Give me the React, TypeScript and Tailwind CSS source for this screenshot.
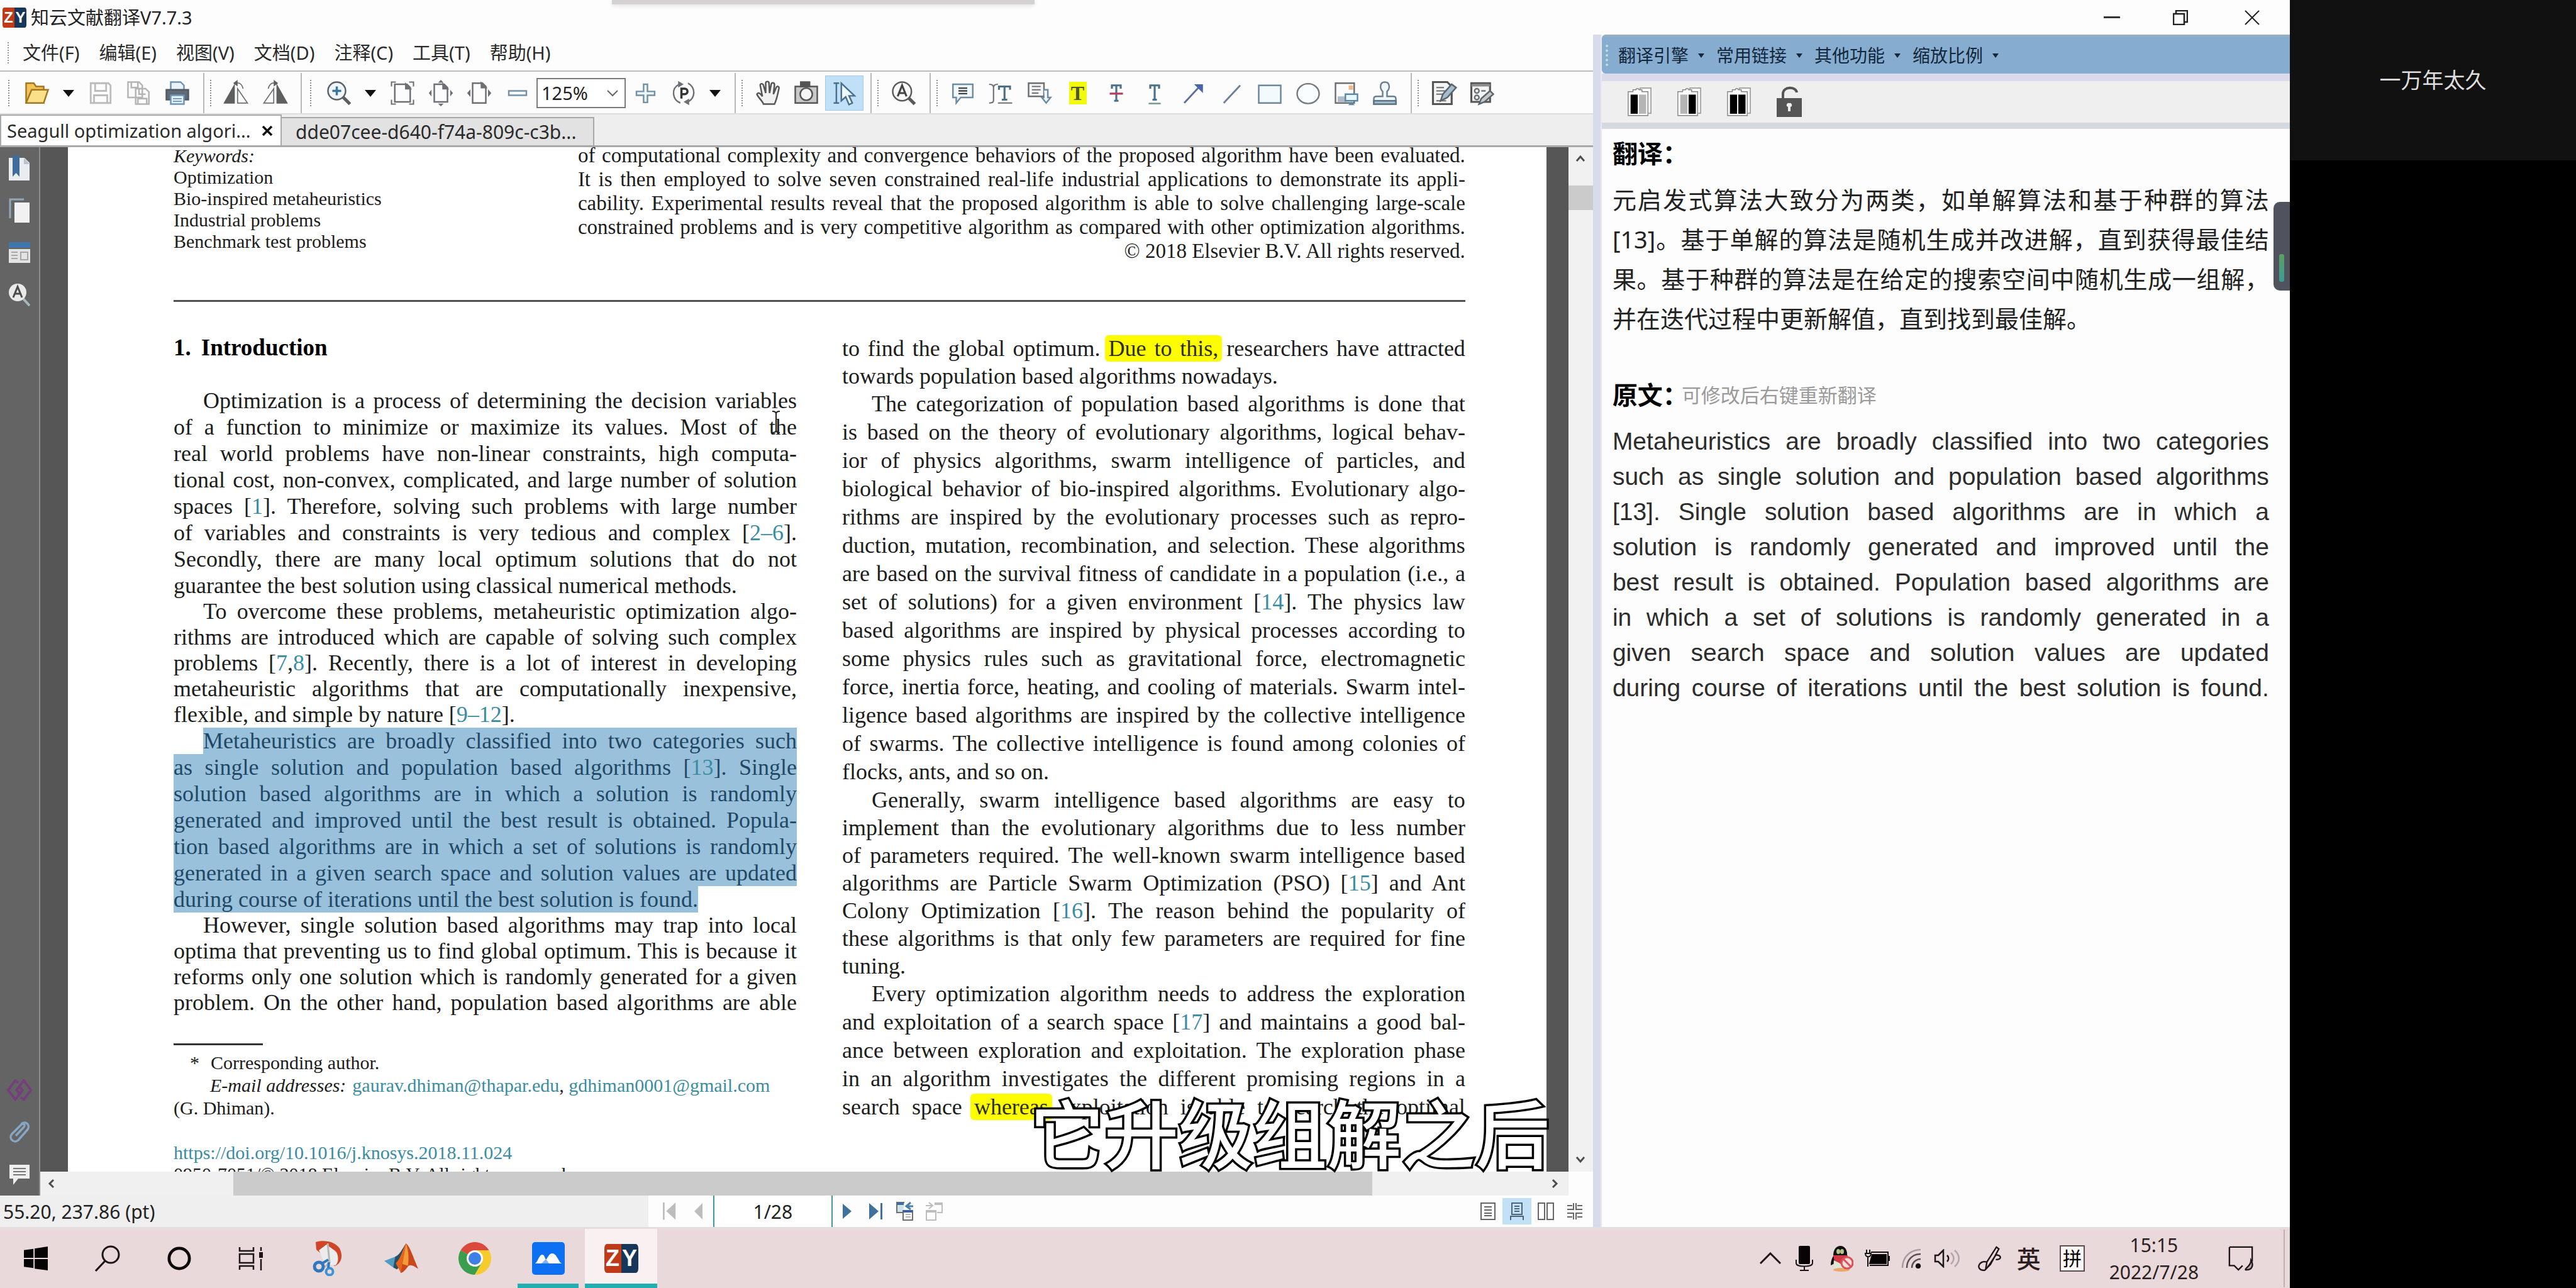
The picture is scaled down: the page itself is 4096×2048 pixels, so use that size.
import React from "react";

type Kids = { children?: React.ReactNode; className?: string };

function Svg({ children, className = "size-[42px]", box = "0 0 24 24" }: Kids & { box?: string }) {
  return (
    <svg viewBox={box} className={className} fill="none" stroke="#6c7074" strokeWidth="1.4" aria-hidden="true">
      {children}
    </svg>
  );
}

function Tool({ label, children, active }: Kids & { label: string; active?: boolean }) {
  return (
    <button
      type="button"
      aria-label={label}
      className={
        active
          ? "flex h-[56px] w-[61px] shrink-0 items-center justify-center border border-[#a9c9e2] bg-[#bfe0f6]"
          : "flex h-[56px] w-[61px] shrink-0 items-center justify-center"
      }
    >
      {children}
    </button>
  );
}

function Caret({ label }: { label: string }) {
  return (
    <button type="button" aria-label={label} className="flex h-[56px] w-[40px] shrink-0 items-center justify-center">
      <svg viewBox="0 0 18 11" className="w-[18px]" aria-hidden="true">
        <path d="M0 0h18L9 11z" fill="#111" />
      </svg>
    </button>
  );
}

function Group({ children, wide, last }: Kids & { wide?: boolean; last?: boolean }) {
  return (
    <div className={last ? "flex items-center" : "flex items-center border-r-2 border-[#b9b9b9] pr-[11px]"}>
      <span className={wide ? "flex w-[28px] justify-center" : "flex w-[20px] justify-center"}>
        <span className="h-[42px] border-l-2 border-dotted border-[#8f8f8f]" />
      </span>
      {children}
    </div>
  );
}

function Toolbar() {
  return (
    <div className="flex h-[70px] items-stretch border-y-2 border-t-[#bdbdbd] border-b-[#dedede] bg-[#fcfcfc] pt-[2px]">
      <Group wide>
        <Tool label="打开">
          <Svg>
            <path d="M2 21V3h7l2 3h7v15z" fill="#f3c455" stroke="#a27622" />
            <path d="M2 21 7 9h15l-4 12z" fill="#fbe089" stroke="#a27622" />
          </Svg>
        </Tool>
        <Caret label="最近文件" />
        <Tool label="保存">
          <Svg>
            <path d="M3 3h16l2 2v16H3z M7 3v7h10V3 M6 21v-7h12v7" stroke="#bcbcbc" strokeWidth="1.6" />
          </Svg>
        </Tool>
        <Tool label="另存为">
          <Svg>
            <path d="M2 2h10l3 3v11H2z M5 2v5h6V2 M9 8h9l3 3v11H9z M12 8v5h6 M11 22v-5h8v5" stroke="#b4b4b4" fill="#fafafa" />
          </Svg>
        </Tool>
        <Tool label="打印">
          <Svg>
            <path d="M6 2h9l3 3v5H6z" fill="#eaf3fa" stroke="#6e93b3" />
            <path d="M2 9h20v9H2z" fill="#5f6a75" stroke="#4e5963" />
            <path d="M6 14h12v8H6z" fill="#e3f1fb" stroke="#6e93b3" />
            <path d="M8 17h8M8 19.500h8" stroke="#6e93b3" strokeWidth="1" />
          </Svg>
        </Tool>
      </Group>
      <Group>
        <Tool label="向左旋转">
          <Svg>
            <path d="M1 21 10 5v16z" fill="#5f5f5f" stroke="#5f5f5f" strokeWidth="1" />
            <path d="M13 8v13h9z M11 3c4-1 6 1 7 5" strokeWidth="1" />
            <path d="m13 0-4 3 4 3z" fill="#5f5f5f" stroke="none" />
          </Svg>
        </Tool>
        <Tool label="向右旋转">
          <Svg>
            <path d="M23 21 14 5v16z" fill="#5f5f5f" stroke="#5f5f5f" strokeWidth="1" />
            <path d="M11 8v13H2z M13 3C9 2 7 4 6 8" strokeWidth="1" />
            <path d="m11 0 4 3-4 3z" fill="#5f5f5f" stroke="none" />
          </Svg>
        </Tool>
      </Group>
      <Group wide>
        <Tool label="放大镜">
          <Svg>
            <path d="m15 15 7 7" stroke="#5d6062" strokeWidth="3" />
            <circle cx="10" cy="10" r="8" fill="#eef7fd" stroke="#5d6062" />
            <path d="M10 6v8M6 10h8" stroke="#3d7398" strokeWidth="2" />
          </Svg>
        </Tool>
        <Caret label="缩放工具" />
        <Tool label="适合页面">
          <Svg>
            <path d="M5 4h11l3 3v13H5z" />
            <path d="M2 6V2h4M18 2h4v4M22 18v4h-4M6 22H2v-4" strokeWidth="1.200" />
            <path d="M15 4v4h4z" fill="#6c7074" />
          </Svg>
        </Tool>
        <Tool label="适合高度">
          <Svg>
            <path d="M6 4h9l3 3v13H6z" />
            <path d="m12 0 2.500 2.500h-5zM12 24l2.500-2.500h-5zM1 12l2.500-3v6zM23 12l-2.500-3v6z" fill="#6c7074" stroke="none" />
            <path d="M14 4v4h4z" fill="#6c7074" />
          </Svg>
        </Tool>
        <Tool label="适合宽度">
          <Svg>
            <path d="M6 3h9l3 3v15H6z" />
            <path d="m1 12 3-3.500v7zM23 12l-3-3.500v7z" fill="#6c7074" stroke="none" />
            <path d="M14 3v4h4z" fill="#6c7074" />
          </Svg>
        </Tool>
        <Tool label="缩小">
          <Svg>
            <path d="M4 10h16v4H4z" fill="#f4fafe" stroke="#7391a5" />
          </Svg>
        </Tool>
        <label className="relative flex h-[48px] w-[142px] shrink-0 items-center border-2 border-[#7b7b7b] bg-white">
          <span className="sr-only">缩放比例</span>
          <select defaultValue="125%" className="h-full w-full appearance-none bg-transparent pl-[6px] text-[29px] leading-[40px] text-[#222]">
            <option>125%</option>
          </select>
          <svg viewBox="0 0 18 12" className="pointer-events-none absolute right-[10px] w-[18px]" fill="none" stroke="#666" strokeWidth="2" aria-hidden="true">
            <path d="m1 2 8 8 8-8" />
          </svg>
        </label>
        <Tool label="放大">
          <Svg>
            <path d="M10.500 4h3.500v6.500h6.500v3.500H14v6.500h-3.500V14H4v-3.500h6.500z" fill="#eff8fe" stroke="#7391a5" />
          </Svg>
        </Tool>
        <Tool label="旋转视图">
          <Svg>
            <path d="M9 21c-7-3-9-13-1-17M16 3c7 4 7 13 0 17" />
            <path d="m7 1 5 3-5 3zM17 23l-5-3 5-3z" fill="#6c7074" stroke="none" />
            <path d="M10 17V8h3a2.500 2.500 0 0 1 0 5h-3" stroke="#333" strokeWidth="2" />
          </Svg>
        </Tool>
        <Caret label="旋转选项" />
      </Group>
      <Group>
        <Tool label="手形工具">
          <Svg>
            <path
              d="M8 22c-1-3-5-6-6-9 1-2 3-1 5 2L5 5c0-2 2.500-2 3 0l2 7V3c0-2 3-2 3 0l.5 9L15 4c.5-2 3-1.500 3 .5L17 13l2.500-6c1-2 3-1 2.500 1-1 5-2 10-4 14z"
              fill="#f1f1f1"
              stroke="#555"
            />
          </Svg>
        </Tool>
        <Tool label="快照">
          <Svg>
            <path d="M2 6h20v15H2z" fill="#c9c9c9" stroke="#555" />
            <path d="M7 2h8v4H7z" fill="#555" stroke="#555" />
            <circle cx="12" cy="13" r="5.500" fill="#f6f6f6" stroke="#555" />
          </Svg>
        </Tool>
        <Tool label="选择文本" active>
          <Svg>
            <path d="M2 3h5M4.500 3v18M2 21h5" stroke="#4a6f8c" />
            <path d="M9 3v16l4-3.500 3 7 3-1.500-3-6.500h5z" fill="#eef8ff" stroke="#4a6f8c" />
          </Svg>
        </Tool>
      </Group>
      <Group>
        <Tool label="查找">
          <Svg>
            <path d="m16 16 6 6" stroke="#5a5a5a" strokeWidth="3" />
            <circle cx="10.500" cy="10.500" r="8.500" fill="#fafafa" stroke="#5a5a5a" />
            <path d="m6.500 15 4-10 4 10M8 12h5" stroke="#444" strokeWidth="1.800" />
          </Svg>
        </Tool>
      </Group>
      <Group>
        <Tool label="注释">
          <Svg>
            <path d="M3 4h18v12H10l-4 5v-5H3z" fill="#f2f9fe" stroke="#6e8ba0" />
            <path d="M8 7.500h8M8 10h8M8 12.500h8" stroke="#444" />
          </Svg>
        </Tool>
        <Tool label="打字机">
          <Svg>
            <path d="M1 4c3 0 4 1 4 3v12c0 1-1 2-4 2M9 4C6 4 5 5 5 7M9 21h13" strokeWidth="1.200" />
            <path d="M10 9V6h10v3M15 6v12M12.500 18h5" stroke="#4c7088" strokeWidth="1.800" />
          </Svg>
        </Tool>
        <Tool label="标注框">
          <Svg>
            <path d="M2 3h14v12H2z" fill="#f6f6f6" />
            <path d="M5 6h8M5 9h8M5 12h6" strokeWidth="1.200" />
            <path d="M16 9h3.500v7H22l-4 5-4-5h2.500" stroke="#6e8ba0" fill="#eff8fe" />
          </Svg>
        </Tool>
        <Tool label="高亮">
          <span className="flex h-[36px] w-[28px] items-center justify-center bg-[#f3f90d] font-['Liberation_Serif',serif] text-[32px] leading-none font-bold text-[#4a5634]">T</span>
        </Tool>
        <Tool label="删除线">
          <Svg>
            <path d="M8 8V5h8v3M12 5v14M10 19h4" stroke="#4c7088" strokeWidth="1.800" />
            <path d="M6 12.500h12" stroke="#b83a5c" strokeWidth="1.800" />
          </Svg>
        </Tool>
        <Tool label="下划线">
          <Svg>
            <path d="M8 8V5h8v3M12 5v13M10 18h4" stroke="#4c7088" strokeWidth="1.800" />
            <path d="M6.500 21.500h11" stroke="#6f9c86" />
          </Svg>
        </Tool>
        <Tool label="箭头">
          <Svg>
            <path d="M4 21 17 7" stroke="#5c6e9b" strokeWidth="1.600" />
            <path d="M13 4h8v8z" fill="#4a64ab" stroke="none" />
          </Svg>
        </Tool>
        <Tool label="直线">
          <Svg>
            <path d="M5 21 20 5" stroke="#6f7f99" strokeWidth="1.600" />
          </Svg>
        </Tool>
        <Tool label="矩形">
          <Svg>
            <path d="M2 5h20v16H2z" fill="#f3fafe" stroke="#6a879c" />
          </Svg>
        </Tool>
        <Tool label="椭圆">
          <Svg>
            <ellipse cx="12" cy="12.500" rx="10" ry="9" stroke="#757b80" fill="#fafdff" />
          </Svg>
        </Tool>
        <Tool label="图像注释">
          <Svg>
            <path d="M2 3h17v18H2z" fill="#fbfbfb" />
            <path d="M4 15h8v5H4z" fill="#aebbc6" stroke="none" />
            <path d="M14 5h4v4h-4z" fill="#f0b98a" stroke="none" />
            <path d="M11 13h11v6H11z" fill="#e7f6ff" stroke="#5b88a8" />
            <path d="m16.500 20 3 3h-6z" fill="#5b88a8" stroke="none" />
          </Svg>
        </Tool>
        <Tool label="图章">
          <Svg>
            <path d="M2 22v-5c0-1.500 1-2 2.500-2h5.500v-4.500c-3-3-2.500-8.500 2-8.500s5 5.500 2 8.500V15h5.500c1.500 0 2.500.5 2.500 2v5z" fill="#f0f8fe" stroke="#6a7f90" />
            <path d="M2 19h20v3H2z" fill="#a9c0d0" stroke="#5c7588" />
          </Svg>
        </Tool>
      </Group>
      <Group last>
        <Tool label="编辑内容">
          <Svg>
            <path d="M2 2h13l4 4v16H2z" fill="#f4f4f4" stroke="#555" strokeWidth="1.800" />
            <path d="M5 7h7M5 10h8M5 13h6M5 19h9" strokeWidth="1.200" />
            <path d="m9 19 2-6 8-9 4 3-8 9z" fill="#a5bccd" stroke="#59656e" />
          </Svg>
        </Tool>
        <Tool label="编辑表单">
          <Svg>
            <path d="M2 3h17v17H2z" fill="#f4f4f4" stroke="#555" strokeWidth="1.800" />
            <path d="M2 4h17v2H2z" fill="#8b8b8b" stroke="none" />
            <circle cx="7" cy="10" r="2" />
            <circle cx="7" cy="16" r="2" />
            <path d="M11 10h4" />
            <path d="m9 22 2-5 8-7 3 3-8 7z" fill="#c7c7c7" stroke="#59656e" />
          </Svg>
        </Tool>
      </Group>
    </div>
  );
}

/* ~text~ marks a citation link, ^text^ marks a yellow highlight */
function Rich({ text }: { text: string }) {
  return (
    <>
      {text.split(/(~[^~]+~|\^[^^]+\^)/).map((part, i) => {
        if (part.startsWith("~"))
          return (
            <a key={i} href="#cite" className="text-[#3a8ca3]">
              {part.slice(1, -1)}
            </a>
          );
        if (part.startsWith("^"))
          return (
            <mark key={i} className="-mx-[6px] rounded-[6px] bg-[#fdfd00] px-[6px] py-[1px] text-[#2c2c08]">
              {part.slice(1, -1)}
            </mark>
          );
        return part;
      })}
    </>
  );
}

type ParaProps = { lines: string[]; indent?: boolean; open?: boolean; selected?: boolean };

function Para({ lines, indent = true, open, selected, className = "" }: ParaProps & { className?: string }) {
  return (
    <p className={className}>
      {lines.map((line, i) => {
        const tail = i === lines.length - 1 && !open;
        const cls = [
          "block whitespace-nowrap",
          tail ? "w-fit" : "text-justify [text-align-last:justify]",
          indent && i === 0 ? "ml-[47px]" : "",
          selected ? "bg-[#9ac1db] text-[#1f4866]" : "",
        ].join(" ");
        return (
          <span key={i} className={cls}>
            <Rich text={line} />
          </span>
        );
      })}
    </p>
  );
}

const leftParas: { lines: string[]; cls: string; open?: boolean; selected?: boolean }[] = [
  {
    cls: "leading-[42px]",
    lines: [
      "Optimization is a process of determining the decision variables",
      "of a function to minimize or maximize its values. Most of the",
      "real world problems have non-linear constraints, high computa-",
      "tional cost, non-convex, complicated, and large number of solution",
      "spaces [~1~]. Therefore, solving such problems with large number",
      "of variables and constraints is very tedious and complex [~2–6~].",
      "Secondly, there are many local optimum solutions that do not",
      "guarantee the best solution using classical numerical methods.",
    ],
  },
  {
    cls: "leading-[41px]",
    lines: [
      "To overcome these problems, metaheuristic optimization algo-",
      "rithms are introduced which are capable of solving such complex",
      "problems [~7~,~8~]. Recently, there is a lot of interest in developing",
      "metaheuristic algorithms that are computationally inexpensive,",
      "flexible, and simple by nature [~9–12~].",
    ],
  },
  {
    cls: "leading-[42px]",
    selected: true,
    lines: [
      "Metaheuristics are broadly classified into two categories such",
      "as single solution and population based algorithms [~13~]. Single",
      "solution based algorithms are in which a solution is randomly",
      "generated and improved until the best result is obtained. Popula-",
      "tion based algorithms are in which a set of solutions is randomly",
      "generated in a given search space and solution values are updated",
      "during course of iterations until the best solution is found.",
    ],
  },
  {
    cls: "leading-[41px]",
    open: true,
    lines: [
      "However, single solution based algorithms may trap into local",
      "optima that preventing us to find global optimum. This is because it",
      "reforms only one solution which is randomly generated for a given",
      "problem. On the other hand, population based algorithms are able",
    ],
  },
];

const rightParas: { lines: string[]; cls: string; open?: boolean; indent?: boolean }[] = [
  {
    cls: "leading-[44px]",
    indent: false,
    lines: [
      "to find the global optimum. ^Due to this,^ researchers have attracted",
      "towards population based algorithms nowadays.",
    ],
  },
  {
    cls: "leading-[45px]",
    lines: [
      "The categorization of population based algorithms is done that",
      "is based on the theory of evolutionary algorithms, logical behav-",
      "ior of physics algorithms, swarm intelligence of particles, and",
      "biological behavior of bio-inspired algorithms. Evolutionary algo-",
      "rithms are inspired by the evolutionary processes such as repro-",
      "duction, mutation, recombination, and selection. These algorithms",
      "are based on the survival fitness of candidate in a population (i.e., a",
      "set of solutions) for a given environment [~14~]. The physics law",
      "based algorithms are inspired by physical processes according to",
      "some physics rules such as gravitational force, electromagnetic",
      "force, inertia force, heating, and cooling of materials. Swarm intel-",
      "ligence based algorithms are inspired by the collective intelligence",
      "of swarms. The collective intelligence is found among colonies of",
      "flocks, ants, and so on.",
    ],
  },
  {
    cls: "leading-[44px]",
    lines: [
      "Generally, swarm intelligence based algorithms are easy to",
      "implement than the evolutionary algorithms due to less number",
      "of parameters required. The well-known swarm intelligence based",
      "algorithms are Particle Swarm Optimization (PSO) [~15~] and Ant",
      "Colony Optimization [~16~]. The reason behind the popularity of",
      "these algorithms is that only few parameters are required for fine",
      "tuning.",
    ],
  },
  {
    cls: "leading-[45px]",
    open: true,
    lines: [
      "Every optimization algorithm needs to address the exploration",
      "and exploitation of a search space [~17~] and maintains a good bal-",
      "ance between exploration and exploitation. The exploration phase",
      "in an algorithm investigates the different promising regions in a",
      "search space ^whereas^ exploitation is able to search the optimal",
    ],
  },
];

function PdfPage() {
  return (
    <article className="relative min-w-0 flex-1 overflow-hidden bg-white pr-[129px] pl-[168px] font-['Liberation_Serif',serif] text-[36px] text-[#1c1c1c]">
      <header className="flex justify-between border-b-3 border-[#505050] pb-[59px]">
        <div className="-mt-[3px] text-[30px] leading-[34px]">
          <p className="italic">Keywords:</p>
          <p>Optimization</p>
          <p>Bio-inspired metaheuristics</p>
          <p>Industrial problems</p>
          <p>Benchmark test problems</p>
        </div>
        <div className="-mt-[6px] w-[1411px] text-[33px] leading-[38px]">
          <Para
            indent={false}
            open
            lines={[
              "of computational complexity and convergence behaviors of the proposed algorithm have been evaluated.",
              "It is then employed to solve seven constrained real-life industrial applications to demonstrate its appli-",
              "cability. Experimental results reveal that the proposed algorithm is able to solve challenging large-scale",
              "constrained problems and is very competitive algorithm as compared with other optimization algorithms.",
            ]}
          />
          <p className="text-right">© 2018 Elsevier B.V. All rights reserved.</p>
        </div>
      </header>
      <div className="grid grid-cols-2 gap-[72px] pt-[52px]">
        <div>
          <h2 className="mb-[42px] flex gap-[16px] text-[37px] leading-[42px] font-bold text-black">
            <span>1.</span>
            <span>Introduction</span>
          </h2>
          {leftParas.map((p, i) => (
            <Para key={i} lines={p.lines} open={p.open} selected={p.selected} className={p.cls} />
          ))}
          <div className="mt-[44px] w-[142px] border-t-3 border-[#333]" />
          <footer className="pt-[10px] text-[30px] leading-[36px]">
            <p className="flex gap-[18px] pl-[26px]">
              <span>*</span>
              <span>Corresponding author.</span>
            </p>
            <p className="pl-[58px] whitespace-nowrap">
              <i className="mr-[10px]">E-mail addresses:</i>
              <a href="#mail1" className="text-[#3a8ca3]">gaurav.dhiman@thapar.edu</a>,{" "}
              <a href="#mail2" className="text-[#3a8ca3]">gdhiman0001@gmail.com</a>
            </p>
            <p>(G. Dhiman).</p>
            <p className="mt-[36px] leading-[34px]">
              <a href="#doi" className="text-[#3a8ca3]">https://doi.org/10.1016/j.knosys.2018.11.024</a>
            </p>
            <p className="leading-[34px]">0950-7051/© 2018 Elsevier B.V. All rights reserved.</p>
          </footer>
        </div>
        <div>
          {rightParas.map((p, i) => (
            <Para key={i} lines={p.lines} open={p.open} indent={p.indent} className={p.cls} />
          ))}
        </div>
      </div>
      <svg viewBox="0 0 12 36" className="absolute top-[419px] left-[1120px] w-[12px]" fill="none" stroke="#222" strokeWidth="2" aria-hidden="true">
        <path d="M0 1c4 0 6 1 6 4v26c0 3-2 4-6 4M12 1c-4 0-6 1-6 4M12 35c-4 0-6-1-6-4" />
      </svg>
    </article>
  );
}

function Arrow({ d, className }: { d: string; className: string }) {
  return (
    <svg viewBox="0 0 16 16" className={className} fill="none" stroke="#4d4d4d" strokeWidth="3" aria-hidden="true">
      <path d={d} />
    </svg>
  );
}

function SideRail() {
  const b = "flex h-[67px] w-full items-center justify-center";
  return (
    <aside className="flex w-[64px] shrink-0 flex-col justify-between border-r-2 border-[#8b8b8b] bg-[#646464]">
      <div className="flex flex-col">
        <button type="button" aria-label="书签" className={b}>
          <svg viewBox="0 0 34 42" className="w-[34px]" aria-hidden="true">
            <path d="M0 4h25l8 8v28H0z" fill="#e9edf0" />
            <path d="M6 0h11v34l-5.500-6L6 34z" fill="#3f6c9b" />
            <path d="M24 4v10h9z" fill="#b9c2ca" />
          </svg>
        </button>
        <button type="button" aria-label="缩略图" className={b}>
          <svg viewBox="0 0 34 40" className="w-[34px]" aria-hidden="true">
            <path d="M2 32V2h22" fill="none" stroke="#93a7b8" strokeWidth="3" />
            <path d="M9 7h24v32H9z" fill="#f1f1f1" />
          </svg>
        </button>
        <button type="button" aria-label="图层" className={b}>
          <svg viewBox="0 0 34 34" className="w-[34px]" aria-hidden="true">
            <path d="M0 0h34v9H0z" fill="#3f76ad" />
            <path d="M0 11h34v22H0z" fill="#e4e4e4" />
            <path d="M4 16h10M4 21h10M4 26h10M19 16h11v12H19z" stroke="#a8a8a8" strokeWidth="2" fill="none" />
          </svg>
        </button>
        <button type="button" aria-label="搜索" className={b}>
          <svg viewBox="0 0 34 36" className="w-[34px]" fill="none" aria-hidden="true">
            <path d="m22 23 11 12" stroke="#aab4bb" strokeWidth="4" />
            <circle cx="14" cy="14" r="14" fill="#e9e9e9" />
            <path d="m7 22 7-17 7 17M10 16h8" stroke="#4c4c4c" strokeWidth="3" />
          </svg>
        </button>
      </div>
      <div className="flex flex-col">
        <button type="button" aria-label="插件" className={b}>
          <svg viewBox="0 0 44 36" className="w-[42px]" fill="none" stroke="#763f7c" strokeWidth="4" aria-hidden="true">
            <path d="M20 6 15 2 3 18l12 16 12-16-7-7M24 30l5 4 12-16L29 2 17 18l7 8" />
          </svg>
        </button>
        <button type="button" aria-label="附件" className={b}>
          <svg viewBox="0 0 34 40" className="w-[34px]" fill="none" stroke="#86a6c3" strokeWidth="3.500" aria-hidden="true">
            <path d="m11 25 13-14c3-3-1-7-4-4L5 22c-6 7 3 16 10 10l14-16c7-8-3-16-9-10" />
          </svg>
        </button>
        <button type="button" aria-label="评论" className={b}>
          <svg viewBox="0 0 32 32" className="w-[32px]" aria-hidden="true">
            <path d="M0 0h32v22H14l-8 10V22H0z" fill="#efefef" />
            <path d="M6 6h20M6 11h20M6 16h20" stroke="#777" strokeWidth="2" />
          </svg>
        </button>
      </div>
    </aside>
  );
}

function StatusBar() {
  const b = "flex h-full w-[46px] items-center justify-center";
  return (
    <div className="flex h-[50px] items-center bg-[#fdfdfd] text-[30px] text-[#222]">
      <div className="flex h-full flex-1 items-center bg-[#efefef] pl-[5px]">55.20, 237.86 (pt)</div>
      <div className="flex h-full w-[1502px] items-center">
        <span className="w-[11px]" />
        <button type="button" aria-label="首页" className={b}>
          <svg viewBox="0 0 24 30" className="w-[22px]" fill="#bdbdbd" aria-hidden="true"><path d="M0 0h3v30H0zM22 0v30L6 15z" /></svg>
        </button>
        <button type="button" aria-label="上一页" className={b}>
          <svg viewBox="0 0 14 28" className="w-[13px]" fill="#bdbdbd" aria-hidden="true"><path d="M14 0v28L0 14z" /></svg>
        </button>
        <input aria-label="页码" defaultValue="1/28" className="h-full w-[190px] border-x-2 border-[#3b9a9a] bg-white text-center" />
        <button type="button" aria-label="下一页" className={b}>
          <svg viewBox="0 0 14 24" className="w-[14px]" fill="#3f719b" aria-hidden="true"><path d="M0 0v24l14-12z" /></svg>
        </button>
        <button type="button" aria-label="末页" className={b}>
          <svg viewBox="0 0 22 26" className="w-[22px]" fill="#3f719b" aria-hidden="true"><path d="M0 0v26l15-13zM18 0h3v26h-3z" /></svg>
        </button>
        <button type="button" aria-label="后退" className={b}>
          <svg viewBox="0 0 28 30" className="w-[28px]" fill="none" stroke="#707070" strokeWidth="2" aria-hidden="true">
            <path d="M11 17H1V1h12" fill="#cfe3ea" />
            <path d="M1 3h11" stroke="#3f6ea0" strokeWidth="4" />
            <path d="M27 7h-9m5-6-7 6 7 5" stroke="#4a7fa8" strokeWidth="3" />
            <path d="M11 14h15v15H11z" fill="#fafafa" />
            <path d="M11 15h15" stroke="#3f5f9a" strokeWidth="4" />
            <path d="M15 20h8M15 24h8" strokeWidth="1" />
          </svg>
        </button>
        <button type="button" aria-label="前进" className={b}>
          <svg viewBox="0 0 28 30" className="w-[28px]" fill="none" stroke="#bdbdbd" strokeWidth="2" aria-hidden="true">
            <path d="M15 2h12v15h-8M1 6h9M6 1l6 5-6 5M2 14h15v15H2z" />
            <path d="M15 3h12M2 15h15" strokeWidth="4" />
          </svg>
        </button>
        <div className="flex h-full flex-1 items-center justify-end pr-[6px]">
          <button type="button" aria-label="单页" className={b}>
            <svg viewBox="0 0 24 28" className="w-[24px]" fill="none" stroke="#666" strokeWidth="2" aria-hidden="true">
              <path d="M1 1h22v26H1zM6 7h12M6 12h12M6 17h12M6 21h12" />
            </svg>
          </button>
          <button type="button" aria-label="连续" className="flex h-[42px] w-[46px] items-center justify-center bg-[#c2e1f6]">
            <svg viewBox="0 0 22 28" className="w-[22px]" fill="none" stroke="#4f6474" strokeWidth="2" aria-hidden="true">
              <path d="M3 1h16v18H3zM7 6h8M7 10h8M7 14h8M1 28v-6h20v6" />
            </svg>
          </button>
          <button type="button" aria-label="双页" className={b}>
            <svg viewBox="0 0 26 28" className="w-[26px]" fill="none" stroke="#666" strokeWidth="2" aria-hidden="true">
              <path d="M1 1h10v26H1zM15 1h10v26H15z" />
            </svg>
          </button>
          <button type="button" aria-label="双页连续" className={b}>
            <svg viewBox="0 0 26 28" className="w-[26px]" fill="none" stroke="#666" strokeWidth="2" aria-hidden="true">
              <path d="M1 11h10V1M25 11H15V1M1 17h10v10M25 17H15v10M1 5h8M17 5h8M1 23h8M17 23h8" />
            </svg>
          </button>
        </div>
      </div>
    </div>
  );
}

function Reader() {
  return (
    <section className="flex min-w-0 flex-1 flex-col border-r-[12px] border-[#d8dbeb]">
      <nav className="flex h-[57px] items-center gap-[31px] bg-[#fdfdfd] text-[29px] text-[#2a2a2a]">
        <span className="mr-[-9px] ml-[12px] h-[34px] border-l-2 border-dotted border-[#999]" />
        {["文件(F)", "编辑(E)", "视图(V)", "文档(D)", "注释(C)", "工具(T)", "帮助(H)"].map((m) => (
          <button key={m} type="button">{m}</button>
        ))}
      </nav>
      <Toolbar />
      <div className="flex h-[52px] items-end border-b-3 border-[#a9a9a9] bg-[#eeeeee] text-[29px] text-[#2a2a2a]">
        <div className="flex h-[49px] w-[448px] items-center justify-between border-x-2 border-t-2 border-[#a9a9a9] bg-white pr-[9px] pl-[9px]">
          <button type="button" className="leading-[45px] whitespace-nowrap">Seagull optimization algori...</button>
          <button type="button" aria-label="关闭标签">
            <svg viewBox="0 0 16 16" className="mr-[4px] w-[16px]" stroke="#111" strokeWidth="3.500" aria-hidden="true">
              <path d="m1 1 14 14M15 1 1 15" />
            </svg>
          </button>
        </div>
        <button type="button" className="flex h-[45px] w-[497px] items-center border-t-2 border-r-2 border-[#a9a9a9] bg-[#e2e2e2] pl-[22px] text-[30px] whitespace-nowrap">
          dde07cee-d640-f74a-809c-c3b...
        </button>
      </div>
      <div className="flex min-h-0 flex-1">
        <SideRail />
        <div className="flex min-w-0 flex-1 flex-col">
          <div className="flex min-h-0 flex-1">
            <div className="flex min-w-0 flex-1 bg-[#565656] pr-[35px] pl-[44px]">
              <PdfPage />
            </div>
            <div className="flex w-[39px] shrink-0 flex-col items-center justify-between bg-[#f1f1f1]">
              <div className="flex w-full flex-col items-center">
                <Arrow d="m2 11 6-7 6 7" className="mt-[11px] mb-[34px] w-[16px]" />
                <div className="h-[39px] w-full bg-[#cbcbcb]" />
              </div>
              <Arrow d="m2 5 6 7 6-7" className="mb-[12px] w-[16px]" />
            </div>
          </div>
          <div className="mr-[39px] flex h-[38px] items-center justify-between bg-[#f0f0f0] pr-[14px] pl-[10px]">
            <Arrow d="M11 2 5 8l6 6" className="w-[16px]" />
            <div className="h-full w-[1811px] bg-[#cbcbcb]" />
            <Arrow d="m5 2 6 6-6 6" className="w-[16px]" />
          </div>
        </div>
      </div>
      <StatusBar />
    </section>
  );
}

function Clip({ label, left, right }: { label: string; left: string; right: string }) {
  return (
    <button type="button" aria-label={label}>
      <svg viewBox="0 0 42 48" className="w-[40px]" fill="none" aria-hidden="true">
        <path d="M22 5V1h18v42h-4" stroke="#8f8f8f" strokeWidth="1.500" fill="#fafafa" />
        <path d="M2 7h8V4h5c0-3 5-3 5 0h5v3h10v40H2z" fill="#fff" stroke="#858585" strokeWidth="1.500" />
        <path d="M6 12h12v32H6z" fill={left} />
        <path d="M20 12h12v32H20z" fill={right} />
      </svg>
    </button>
  );
}

function Translator() {
  const zh = [
    "元启发式算法大致分为两类，如单解算法和基于种群的算法",
    "[13]。基于单解的算法是随机生成并改进解，直到获得最佳结",
    "果。基于种群的算法是在给定的搜索空间中随机生成一组解，",
    "并在迭代过程中更新解值，直到找到最佳解。",
  ];
  const en = [
    "Metaheuristics are broadly classified into two categories",
    "such as single solution and population based algorithms",
    "[13]. Single solution based algorithms are in which a",
    "solution is randomly generated and improved until the",
    "best result is obtained. Population based algorithms are",
    "in which a set of solutions is randomly generated in a",
    "given search space and solution values are updated",
    "during course of iterations until the best solution is found.",
  ];
  return (
    <section className="relative flex w-[1096px] shrink-0 flex-col border-l-2 border-[#e8e8f2] bg-[#fdfdfd]">
      <nav className="flex h-[62px] items-center gap-[12px] rounded-l-[6px] border-t-4 border-[#93aec4] bg-[#86adcf] text-[28px] text-[#12263c]">
        <span className="ml-[6px] h-[34px] border-l-4 border-dotted border-[#c5ddd9]" />
        <div className="flex gap-[12px] pl-[4px]">
          {["翻译引擎", "常用链接", "其他功能", "缩放比例"].map((m) => (
            <button key={m} type="button" className="flex w-[144px] items-center gap-[15px]">
              {m}
              <svg viewBox="0 0 10 7" className="w-[10px]" aria-hidden="true"><path d="M0 0h10L5 7z" fill="#12263c" /></svg>
            </button>
          ))}
        </div>
      </nav>
      <div className="flex h-[88px] items-center gap-[39px] border-t-[12px] border-b-[10px] border-t-[#dadaeb] border-b-[#d6d9df] bg-[#efefef] pl-[40px]">
        <Clip label="复制译文" left="#000" right="#b5b5b5" />
        <Clip label="复制原文" left="#b5b5b5" right="#000" />
        <Clip label="复制全部" left="#000" right="#000" />
        <button type="button" aria-label="锁定">
          <svg viewBox="0 0 42 50" className="w-[42px]" fill="none" aria-hidden="true">
            <path d="M11 20V12c0-12 21-12 22-2" stroke="#555" strokeWidth="4" />
            <path d="M1 19h40v30H1z" fill="#555" />
            <path d="M21 27a3 3 0 0 1 2 6v7h-4v-7a3 3 0 0 1 2-6z" fill="#eee" />
          </svg>
        </button>
      </div>
      <div className="pt-[9px] pr-[33px] pl-[17px] text-[#222]">
        <h2 className="text-[40px] leading-[60px] font-bold text-black">翻译：</h2>
        <p className="mt-[12px] text-[38px] leading-[63px]">
          {zh.map((t, i) => (
            <span key={i} className={i < 3 ? "block whitespace-nowrap text-justify [text-align-last:justify]" : "block"}>{t}</span>
          ))}
        </p>
        <div className="mt-[60px] flex items-center leading-[60px]">
          <h2 className="text-[40px] font-bold text-black">原文：</h2>
          <span className="-ml-[10px] text-[31px] text-[#9a9a9a]">可修改后右键重新翻译</span>
        </div>
        <p className="mt-[16px] font-['Liberation_Sans',sans-serif] text-[39px] leading-[56px] text-[#2c2c2c]">
          {en.map((t) => (
            <span key={t} className="block whitespace-nowrap text-justify [text-align-last:justify]">{t}</span>
          ))}
        </p>
      </div>
      <div className="absolute top-[266px] right-0 flex h-[141px] w-[26px] items-end justify-center rounded-l-[10px] bg-[#50525e] pb-[14px]">
        <span className="h-[44px] w-[8px] rounded-[3px] bg-linear-to-b from-[#5aa05f] to-[#3f9a97]" />
      </div>
    </section>
  );
}

function ZyLogo({ className }: { className: string }) {
  return (
    <span className={className} aria-hidden="true">
      <span className="flex h-full w-1/2 items-center justify-center rounded-l-[15%] bg-[#c03a17]">Z</span>
      <span className="flex h-full w-1/2 items-center justify-center rounded-r-[15%] bg-[#16375a]">Y</span>
    </span>
  );
}

function Taskbar() {
  const b = "flex h-full w-[114px] items-center justify-center";
  const c = "flex h-full w-[117px] items-center justify-center";
  return (
    <footer className="flex h-[97px] shrink-0 items-center justify-between border-t-3 border-[#e3dddd] bg-[#ead9db] text-[#2b1f22]">
      <div className="flex h-full items-center">
        <button type="button" aria-label="开始" className={b}>
          <svg viewBox="0 0 40 40" className="w-[38px]" aria-hidden="true"><path d="M0 6l16-2v15H0zM18 3.500 40 0v19H18zM0 21h16v15L0 34zM18 21h22v19l-22-3z" fill="#060304" /></svg>
        </button>
        <button type="button" aria-label="搜索" className={b}>
          <svg viewBox="0 0 40 42" className="w-[40px]" fill="none" stroke="#1d1517" strokeWidth="3" aria-hidden="true"><circle cx="25" cy="15" r="13" /><path d="M16 25 1 41" /></svg>
        </button>
        <button type="button" aria-label="语音助手" className={b}>
          <svg viewBox="0 0 40 40" className="w-[38px]" fill="none" stroke="#0d090a" strokeWidth="5" aria-hidden="true"><circle cx="20" cy="20" r="17" /></svg>
        </button>
        <button type="button" aria-label="任务视图" className={b}>
          <svg viewBox="0 0 40 38" className="w-[40px]" fill="none" stroke="#1d1517" strokeWidth="2.500" aria-hidden="true">
            <path d="M2 1v6h22V1M2 12h22v14H2zM2 37v-6h22v6M36 1v6M36 20v18" /><path d="M36 9v9" strokeWidth="6" />
          </svg>
        </button>
        <span className="w-[6px]" />
        <button type="button" aria-label="截图工具" className={c}>
          <svg viewBox="0 0 48 56" className="w-[48px]" fill="none" aria-hidden="true">
            <path d="M5 2c12-4 30-2 38 10 6 12 3 24-8 28L6 14z" fill="#cf4527" />
            <path d="m22 6-12 9 10 22 16 2c6-4 6-18 0-23z" fill="#ececec" />
            <path d="m24 4 3 30-8 8" stroke="#b8b8b8" strokeWidth="3" />
            <circle cx="10" cy="41" r="7" stroke="#2f78bd" strokeWidth="5" />
            <circle cx="27" cy="49" r="5.500" stroke="#3f92d6" strokeWidth="4" />
            <path d="m15 36 10-6M25 43l1-9" stroke="#2f78bd" strokeWidth="4" />
          </svg>
        </button>
        <button type="button" aria-label="MATLAB" className={c}>
          <svg viewBox="0 0 56 50" className="w-[54px]" aria-hidden="true">
            <path d="M0 29 18 22l9 8-12 10z" fill="#4f9cc0" />
            <path d="M18 22c8-3 12-14 18-22l-4 30-11 13-6-3z" fill="#2a4e63" />
            <path d="M36 0c-5 8-8 24-17 33l8 15c6-3 8-12 13-11z" fill="#e8641c" />
            <path d="M36 0c7 6 12 24 20 42-6-4-12-8-16-5-4 5-7 10-13 12z" fill="#c9471a" />
            <path d="M36 0c4 12 5 24 3 37l-9-3z" fill="#f39b39" />
          </svg>
        </button>
        <button type="button" aria-label="Chrome" className={c}>
          <svg viewBox="0 0 52 52" className="w-[52px]" aria-hidden="true">
            <path d="M26 26 3.500 13A26 26 0 0 1 48.500 13z" fill="#d94a3d" />
            <path d="m26 26 11 7-11 19A26 26 0 0 1 3.500 13z" fill="#3a9e4e" />
            <path d="M26 26V13h22.500A26 26 0 0 1 26 52l11.500-19.500z" fill="#f7cb2d" />
            <circle cx="26" cy="26" r="13" fill="#fff" />
            <circle cx="26" cy="26" r="10" fill="#3f7fe6" />
          </svg>
        </button>
        <button type="button" aria-label="会议" className={c}>
          <span className="flex h-full w-[97px] items-center justify-center border-b-[7px] border-[#24aeb1] pt-[7px]">
            <svg viewBox="0 0 52 52" className="w-[52px]" aria-hidden="true">
              <rect width="52" height="52" rx="5" fill="#0d6ff2" />
              <path d="M5 34c4-2 6-14 11-14 4 0 4 5 6 8 3-3 5-10 10-10 7 0 10 13 15 16z" fill="#fff" />
              <path d="m15 34 7-7 5 7z" fill="#7db2fb" />
            </svg>
          </span>
        </button>
        <button type="button" aria-label="知云文献翻译" className="flex h-full w-[115px] items-center justify-center border-b-[7px] border-[#24aeb1] bg-[#f8f0f1] pt-[7px]">
          <ZyLogo className="flex h-[46px] w-[54px] font-['Liberation_Sans',sans-serif] text-[36px] font-bold text-white" />
        </button>
      </div>
      <div className="flex h-full items-center">
        <div className="flex items-center gap-[18px]">
          <svg viewBox="0 0 34 20" className="w-[34px]" fill="none" stroke="#1d1517" strokeWidth="3" aria-hidden="true"><path d="m1 18 16-16 16 16" /></svg>
          <svg viewBox="0 0 28 40" className="ml-[5px] w-[28px]" fill="none" aria-hidden="true">
            <rect x="5" width="18" height="29" rx="2" fill="#080304" />
            <path d="M1 22v6c1 6 25 6 26 0v-6M14 33v6M7 39h14" stroke="#1d1517" strokeWidth="2" />
          </svg>
          <svg viewBox="0 0 36 42" className="ml-[10px] w-[36px]" aria-hidden="true">
            <path d="M4 16C4-4 27-4 26 16z" fill="#111" />
            <ellipse cx="12" cy="10" rx="3" ry="4" fill="#b6c48c" /><ellipse cx="18" cy="10" rx="3" ry="4" fill="#b6c48c" />
            <path d="M0 32c0-7 2-12 5-16l3 12z" fill="#111" />
            <path d="M4 16h23l4 20H8z" fill="#cf3a45" />
            <path d="M5 24c8 4 14 6 18 14H8c-3-3-4-8-3-14z" fill="#dfe6d4" />
            <ellipse cx="17" cy="39" rx="13" ry="3" fill="#e9a86b" />
            <circle cx="26" cy="28" r="9" fill="#f8dcdc" stroke="#dd5058" strokeWidth="3" />
            <path d="m20 22 12 12" stroke="#dd5058" strokeWidth="3" />
          </svg>
          <svg viewBox="0 0 40 28" className="w-[40px]" fill="none" stroke="#151011" strokeWidth="2" aria-hidden="true">
            <path d="M10 4h27v21H8M39 10v8" /><path d="M12 8h22v14H8z" fill="#080304" /><path d="M3 0v5M8 0v5M1 6h9c0 7-9 7-9 0zM5 11v16" fill="#ead9db" />
          </svg>
          <svg viewBox="0 0 32 32" className="w-[32px]" fill="none" stroke="#5b4e51" strokeWidth="2.500" aria-hidden="true">
            <path d="M2 31C2 14 14 2 31 2" stroke="#a89a9d" /><path d="M9 31c0-13 9-22 22-22" /><path d="M17 31c0-8 6-14 14-14" /><circle cx="27" cy="28" r="3" fill="#151011" stroke="#151011" />
          </svg>
          <svg viewBox="0 0 42 30" className="ml-[2px] w-[42px]" fill="none" stroke="#1d1517" strokeWidth="2.500" aria-hidden="true">
            <path d="M2 10h5l8-8v26l-8-8H2z" /><path d="M21 10c3 3 3 7 0 10" /><path d="M27 6c6 6 6 12 0 18M33 2c9 8 9 18 0 26" stroke="#b3a5a8" />
          </svg>
          <svg viewBox="0 0 40 42" className="ml-[10px] w-[38px]" fill="none" stroke="#1d1517" strokeWidth="2.500" aria-hidden="true">
            <path d="m13 39 2-12L31 2l4 3-14 26zM15 27c-14-4-20 14-4 14 7-4 16-24 20-26 8 1 10 8-1 8" />
          </svg>
          <span className="ml-[6px] text-[38px] leading-[48px] font-medium">英</span>
          <span className="ml-[12px] border-2 border-[#5a5054] bg-[#fbf6f6] px-[3px] text-[30px] leading-[38px] text-black">拼</span>
        </div>
        <div className="ml-[30px] w-[160px] text-center text-[30px] leading-[43px]">
          <div>15:15</div>
          <div>2022/7/28</div>
        </div>
        <button type="button" aria-label="通知" className="ml-[38px]">
          <svg viewBox="0 0 42 42" className="w-[40px]" fill="none" stroke="#1d1517" strokeWidth="2.500" aria-hidden="true">
            <path d="M2 2h38v24M2 2v31h8l7 7 7-7" /><path d="M38 24c5 8 2 17-9 16-2-3 9-5 9-16z" fill="#b9a9ac" />
          </svg>
        </button>
        <span className="mr-[8px] ml-[48px] h-[92px] border-l-2 border-[#bfb0b3]" />
      </div>
    </footer>
  );
}

export default function App() {
  return (
    <div className="relative grid h-screen grid-cols-[8fr_1fr] overflow-hidden bg-black font-['Noto_Sans','Noto_Sans_CJK_SC',sans-serif]">
      <main className="flex min-h-0 min-w-0 flex-col bg-[#fdfdfd]">
        <header className="flex h-[55px] shrink-0 items-center justify-between text-[29px] text-[#222]">
          <h1 className="flex items-center gap-[7px] pl-[4px]">
            <ZyLogo className="flex h-[32px] w-[38px] font-['Liberation_Sans',sans-serif] text-[24px] font-bold text-white" />
            知云文献翻译V7.7.3
          </h1>
          <div className="flex h-full items-center pr-[48px]">
            <button type="button" aria-label="最小化" className="mr-[84px] w-[26px] border-t-3 border-[#333]" />
            <button type="button" aria-label="还原" className="mr-[90px]">
              <svg viewBox="0 0 24 24" className="w-[24px]" fill="none" stroke="#222" strokeWidth="2.500" aria-hidden="true"><path d="M1 6h17v17H1zM5 6V1h18v18h-5" /></svg>
            </button>
            <button type="button" aria-label="关闭">
              <svg viewBox="0 0 24 24" className="w-[24px]" fill="none" stroke="#222" strokeWidth="2" aria-hidden="true"><path d="m1 1 22 22M23 1 1 23" /></svg>
            </button>
          </div>
        </header>
        <div className="flex min-h-0 flex-1">
          <Reader />
          <Translator />
        </div>
        <Taskbar />
      </main>
      <aside className="bg-black">
        <div className="flex h-[255px] items-center justify-center bg-[#121111] text-[34px] text-[#dedede]">一万年太久</div>
      </aside>
      <div className="absolute top-0 left-[973px] h-[7px] w-[672px] bg-[#d3d1d3] shadow-[0_2px_6px_#e5dfe3]" />
      <p className="absolute bottom-[190px] left-[1638px] font-['Noto_Sans_CJK_SC',sans-serif] text-[118px] leading-[120px] font-medium whitespace-nowrap text-white [-webkit-text-stroke:7px_#000] [paint-order:stroke_fill]">
        它升级组解之后
      </p>
    </div>
  );
}
